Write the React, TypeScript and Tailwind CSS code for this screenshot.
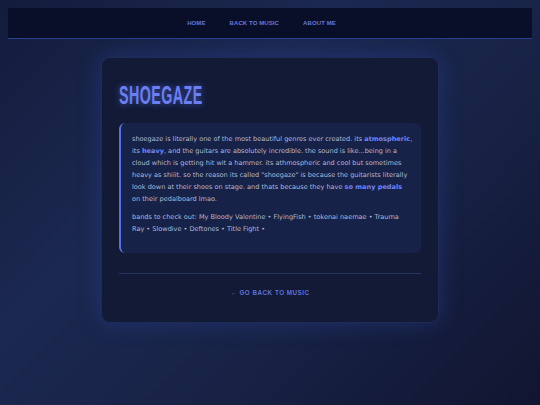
import React from "react";

export default function App() {
  const body = { fontFamily: '"DejaVu Sans", "Noto Sans", sans-serif' };
  const narrow = { fontFamily: '"Liberation Sans", Arial, sans-serif' };
  return (
    <div
      className="w-[540px] h-[405px] overflow-hidden bg-[linear-gradient(135deg,#141c3c_0%,#1b2850_35%,#172245_65%,#111530_100%)] pt-2 px-2"
      style={body}
    >
      <nav
        className="h-[31px] bg-[#0a0f29] border-b border-[#2b3f8f] flex items-center justify-center gap-[24px] pr-[17px] text-[6px] font-bold tracking-[0.1px] text-[#6577d9]"
        style={narrow}
      >
        <span>HOME</span>
        <span>BACK TO MUSIC</span>
        <span>ABOUT ME</span>
      </nav>
      <div className="flex justify-center pt-[18px]">
        <div className="w-[338px] h-[266px] rounded-[9px] bg-[#121a36] border border-[#1f2b55] shadow-[0_0_22px_rgba(50,80,190,0.35)] px-[17px] pt-[26px]">
          <h1
            className="text-[25px] leading-[22px] font-bold text-[#6a7ff2] tracking-[0.8px] [text-shadow:0_0_8px_rgba(100,125,255,0.6)] origin-left scale-x-[0.57] w-fit"
            style={narrow}
          >
            SHOEGAZE
          </h1>
          <div className="mt-[17px] h-[130px] rounded-[6px] border-l-2 border-[#5b70e6] bg-[#172249] pl-[11px] pt-[10px] text-[6.55px] leading-[12px] text-[#b0b8d2] whitespace-nowrap">
            <p>
              shoegaze is literally one of the most beautiful genres ever created. its{" "}
              <b className="text-[#6f84f5]">atmospheric</b>,<br />
              its <b className="text-[#6f84f5]">heavy</b>, and the guitars are absolutely incredible. the sound is like...being in a<br />
              cloud which is getting hit wit a hammer. its athmospheric and cool but sometimes<br />
              heavy as shiiit. so the reason its called "shoegaze" is because the guitarists literally<br />
              look down at their shoes on stage. and thats because they have{" "}
              <b className="text-[#6f84f5]">so many pedals</b>
              <br />
              on their pedalboard lmao.
            </p>
            <p className="mt-[6px]">
              bands to check out: My Bloody Valentine • FlyingFish • tokenai naemae • Trauma<br />
              Ray • Slowdive • Deftones • Title Fight •
            </p>
          </div>
          <div className="mt-[20px] border-t border-[#263262]" />
          <div
            className="mt-[14px] text-center text-[6.3px] font-bold tracking-[0.5px] text-[#5d71d8]"
            style={narrow}
          >
            ← GO BACK TO MUSIC
          </div>
        </div>
      </div>
    </div>
  );
}
